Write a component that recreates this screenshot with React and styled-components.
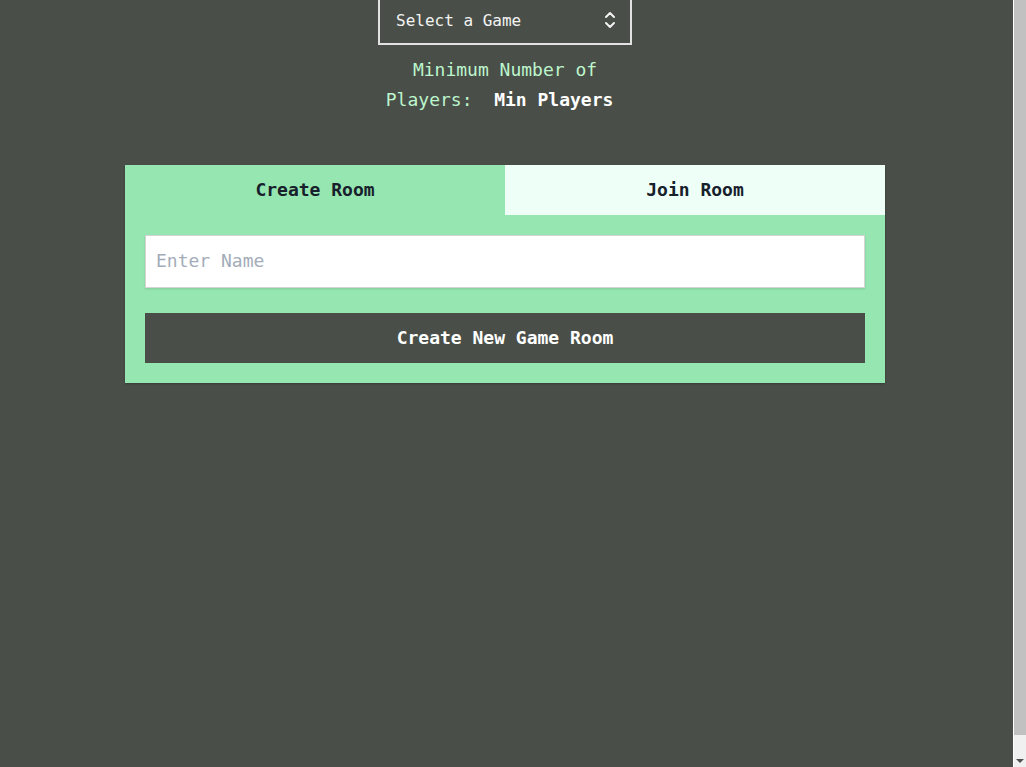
import { useState } from 'react'
import styled, { createGlobalStyle } from 'styled-components'

const colors = {
    page: '#494f48',
    green: '#95e6b0',
    mint: '#edfff7',
    label: '#bdf5cd',
    ink: '#17202b',
}

const GlobalStyle = createGlobalStyle`
    body {
        margin: 0;
        background: ${colors.page};
        font-family: "DejaVu Sans Mono", "Liberation Mono", monospace;
    }
`

const Page = styled.div`
    min-height: 767px;
    padding-right: 16px;
    display: flex;
    flex-direction: column;
    align-items: center;
`

const Scrollbar = styled.div`
    position: fixed;
    top: 0;
    right: 0;
    bottom: 0;
    width: 13px;
    box-sizing: border-box;
    border-left: 1px solid #ffffff;
    background: #f0f0f0;
    display: flex;
    flex-direction: column;
    justify-content: space-between;
    align-items: center;
`

const Thumb = styled.div`
    align-self: stretch;
    height: 735px;
    background: #c1c1c1;
`

const ScrollArrow = styled.div`
    margin-bottom: 4px;
    width: 0;
    height: 0;
    border-left: 4px solid transparent;
    border-right: 4px solid transparent;
    border-top: 4px solid #505050;
`

const SelectBox = styled.label`
    margin-top: -2px;
    width: 254px;
    height: 47px;
    box-sizing: border-box;
    border: 2px solid #e2e2e2;
    display: flex;
    align-items: center;
    justify-content: space-between;
    padding: 0 14px 3px 16px;
    color: #f3f3f3;
    font-size: 16px;
    cursor: pointer;
`

const MinPlayers = styled.p`
    margin: 10px 0 0;
    width: 254px;
    text-align: center;
    font-size: 18px;
    line-height: 30px;
    color: ${colors.label};
    & > strong {
        color: #ffffff;
    }
`

const Card = styled.div`
    margin-top: 50px;
    width: 760px;
    background: ${colors.green};
    box-shadow: 0 1px 2px rgba(0, 0, 0, 0.25);
`

const Tabs = styled.div`
    display: grid;
    grid-template-columns: 1fr 1fr;
`

const Tab = styled.button`
    height: 50px;
    padding: 0 0 2px;
    border: none;
    background: ${props => props.$active ? colors.green : colors.mint};
    color: ${colors.ink};
    font-family: inherit;
    font-size: 18px;
    font-weight: bold;
    cursor: pointer;
`

const Panel = styled.form`
    display: flex;
    flex-direction: column;
    gap: 25px;
    padding: 20px;
`

const NameInput = styled.input`
    height: 53px;
    box-sizing: border-box;
    border: 1px solid #d4d4d4;
    box-shadow: 0 1px 2px rgba(0, 0, 0, 0.12);
    padding: 0 10px 2px;
    font-family: inherit;
    font-size: 18px;
    color: ${colors.ink};
    outline: none;
    &::placeholder {
        color: #a3acb9;
    }
`

const SubmitButton = styled.button`
    height: 50px;
    padding: 0 0 2px;
    border: none;
    background: ${colors.page};
    color: #ffffff;
    font-family: inherit;
    font-size: 18px;
    font-weight: bold;
    cursor: pointer;
`

const UpDown = () => (
    <svg width="12" height="20" viewBox="0 0 12 20" fill="none" stroke="#f3f3f3" strokeWidth="2" strokeLinecap="round" strokeLinejoin="round">
        <path d="M2 7 L6 3 L10 7" />
        <path d="M2 13 L6 17 L10 13" />
    </svg>
)

const App = () => {
    const [tab, setTab] = useState('create')
    const [name, setName] = useState('')

    return (
        <>
            <GlobalStyle />
            <Page>
                <SelectBox>
                    <span>Select a Game</span>
                    <UpDown />
                </SelectBox>
                <MinPlayers>
                    Minimum Number of Players:&nbsp; <strong>Min Players</strong>&nbsp;
                </MinPlayers>
                <Card>
                    <Tabs>
                        <Tab type="button" $active={tab === 'create'} onClick={() => setTab('create')}>Create Room</Tab>
                        <Tab type="button" $active={tab === 'join'} onClick={() => setTab('join')}>Join Room</Tab>
                    </Tabs>
                    <Panel onSubmit={(e) => e.preventDefault()}>
                        <NameInput type="text" placeholder="Enter Name" value={name} onChange={(e) => setName(e.target.value)} />
                        <SubmitButton type="submit">Create New Game Room</SubmitButton>
                    </Panel>
                </Card>
            </Page>
            <Scrollbar>
                <Thumb />
                <ScrollArrow />
            </Scrollbar>
        </>
    )
}

export default App
